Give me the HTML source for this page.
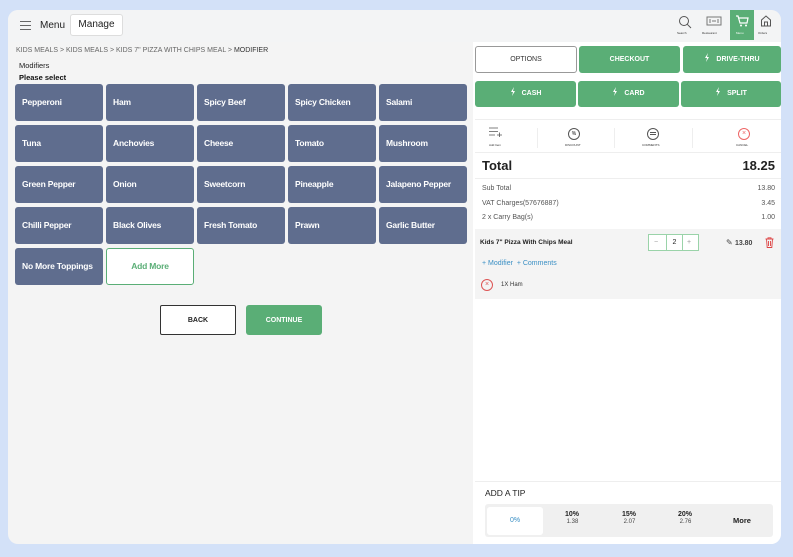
<!DOCTYPE html>
<html><head><style>
*{box-sizing:border-box;margin:0;padding:0}
body{width:793px;height:557px;background:#d3e1f8;font-family:"Liberation Sans",sans-serif;position:relative;overflow:hidden}
.frame{position:absolute;left:8px;top:10px;width:773px;height:534px;background:#f4f4f4;border-radius:10px;overflow:hidden}
.abs{position:absolute}
.hdr{left:0;top:0;width:773px;height:32px;background:#f3f4f5}
.tile{position:absolute;width:88px;height:37px;background:#5f6d8e;border-radius:3px;color:#fff;font-size:8.5px;font-weight:bold;padding-left:7px;line-height:37px;letter-spacing:-0.2px}
.gbtn{position:absolute;background:#5aae76;color:#fff;font-size:7px;font-weight:bold;text-align:center;border-radius:3px}
.small{font-size:7px;color:#555}
.bolt{display:inline-block;width:6px;height:9px;vertical-align:-1px;margin-right:6px}
</style></head><body>
<div class="frame">
 <div class="abs hdr"></div>
 <div class="abs" style="left:12px;top:11px;width:11px;height:1px;background:#666;box-shadow:0 4px 0 #666,0 8px 0 #666"></div>
 <div class="abs" style="left:32px;top:10px;font-size:10px;color:#222">Menu</div>
 <div class="abs" style="left:62px;top:4px;width:53px;height:22px;background:#fff;border:1px solid #ddd;border-radius:3px;font-size:10px;text-align:center;line-height:20px;color:#222">Manage</div>
 <svg class="abs" style="left:670px;top:5px" width="14" height="14" viewBox="0 0 14 14"><circle cx="6" cy="6" r="4.5" fill="none" stroke="#555" stroke-width="1"/><path d="M9.3 9.3L13 13" stroke="#555"/></svg>
 <div class="abs" style="left:669px;top:21px;font-size:3px;color:#333">Search</div>
 <svg class="abs" style="left:698px;top:5px" width="16" height="12" viewBox="0 0 16 12"><rect x="1" y="2" width="14" height="8" fill="none" stroke="#777"/><path d="M4 4v4M12 4v4M6 6h4" stroke="#777"/></svg>
 <div class="abs" style="left:694px;top:21px;font-size:3px;color:#333">Restaurant</div>
 <div class="abs" style="left:722px;top:0;width:24px;height:30px;background:#5aae76"></div>
 <svg class="abs" style="left:727px;top:5px" width="14" height="12" viewBox="0 0 14 12"><path d="M1 1h2l2 7h7l1-5H4" fill="none" stroke="#fff" stroke-width="1.2"/><circle cx="6" cy="10.5" r="1" fill="#fff"/><circle cx="11" cy="10.5" r="1" fill="#fff"/></svg>
 <div class="abs" style="left:728px;top:21px;font-size:3px;color:#fff">Menu</div>
 <svg class="abs" style="left:752px;top:5px" width="12" height="12" viewBox="0 0 12 12"><path d="M1.5 11V5L6 1l4.5 4v6zM4.5 11V7h3v4" fill="none" stroke="#555"/></svg>
 <div class="abs" style="left:750px;top:21px;font-size:3px;color:#333">Orders</div>

 <div class="abs" style="left:8px;top:37px;font-size:7px;color:#666">KIDS MEALS &gt; KIDS MEALS &gt; KIDS 7" PIZZA WITH CHIPS MEAL &gt; <span style="color:#333">MODIFIER</span></div>
 <div class="abs" style="left:11px;top:51px;font-size:7.5px;color:#222">Modifiers</div>
 <div class="abs" style="left:11px;top:63px;font-size:7.5px;color:#111;font-weight:bold">Please select</div>
</div>
<div class="tile" style="left:15px;top:84px">Pepperoni</div>
<div class="tile" style="left:106px;top:84px">Ham</div>
<div class="tile" style="left:197px;top:84px">Spicy Beef</div>
<div class="tile" style="left:288px;top:84px">Spicy Chicken</div>
<div class="tile" style="left:379px;top:84px">Salami</div>
<div class="tile" style="left:15px;top:125px">Tuna</div>
<div class="tile" style="left:106px;top:125px">Anchovies</div>
<div class="tile" style="left:197px;top:125px">Cheese</div>
<div class="tile" style="left:288px;top:125px">Tomato</div>
<div class="tile" style="left:379px;top:125px">Mushroom</div>
<div class="tile" style="left:15px;top:166px">Green Pepper</div>
<div class="tile" style="left:106px;top:166px">Onion</div>
<div class="tile" style="left:197px;top:166px">Sweetcorn</div>
<div class="tile" style="left:288px;top:166px">Pineapple</div>
<div class="tile" style="left:379px;top:166px">Jalapeno Pepper</div>
<div class="tile" style="left:15px;top:207px">Chilli Pepper</div>
<div class="tile" style="left:106px;top:207px">Black Olives</div>
<div class="tile" style="left:197px;top:207px">Fresh Tomato</div>
<div class="tile" style="left:288px;top:207px">Prawn</div>
<div class="tile" style="left:379px;top:207px">Garlic Butter</div>
<div class="tile" style="left:15px;top:248px">No More Toppings</div>
<div class="tile" style="left:106px;top:248px;background:#fff;border:1px solid #5aae76;color:#5aae76;text-align:center;padding:0;line-height:35px">Add More</div>
<div class="abs" style="left:160px;top:305px;width:76px;height:30px;background:#fff;border:1px solid #333;border-radius:2px;font-size:7px;font-weight:bold;text-align:center;line-height:30px;color:#222">BACK</div>
<div class="gbtn" style="left:246px;top:305px;width:76px;height:30px;line-height:32px">CONTINUE</div>

<div class="abs" style="left:473px;top:42px;width:308px;height:502px;background:#fff;border-bottom-right-radius:10px"></div>
<div class="abs" style="left:475px;top:46px;width:102px;height:27px;border:1px solid #999;border-radius:3px;font-size:7px;text-align:center;line-height:25px;color:#333">OPTIONS</div>
<div class="gbtn" style="left:579px;top:46px;width:101px;height:27px;line-height:27px">CHECKOUT</div>
<div class="gbtn" style="left:683px;top:46px;width:98px;height:27px;line-height:27px"><svg class="bolt" viewBox="0 0 6 9"><path d="M4 0L1 5h2L2 9l3-5H3z" fill="#fff"/></svg>DRIVE-THRU</div>
<div class="gbtn" style="left:475px;top:81px;width:101px;height:26px;line-height:26px"><svg class="bolt" viewBox="0 0 6 9"><path d="M4 0L1 5h2L2 9l3-5H3z" fill="#fff"/></svg>CASH</div>
<div class="gbtn" style="left:578px;top:81px;width:101px;height:26px;line-height:26px"><svg class="bolt" viewBox="0 0 6 9"><path d="M4 0L1 5h2L2 9l3-5H3z" fill="#fff"/></svg>CARD</div>
<div class="gbtn" style="left:681px;top:81px;width:100px;height:26px;line-height:26px"><svg class="bolt" viewBox="0 0 6 9"><path d="M4 0L1 5h2L2 9l3-5H3z" fill="#fff"/></svg>SPLIT</div>
<div class="abs" style="left:475px;top:119px;width:306px;height:1px;background:#eee"></div>
<svg class="abs" style="left:489px;top:127px" width="13" height="10" viewBox="0 0 13 10"><path d="M0 1h9M0 4.5h9M0 8h6M8 8h5M10.5 5.5v5" stroke="#555" stroke-width="0.8"/></svg>
<div class="abs" style="left:489px;top:143px;font-size:3px;color:#333">Add Item</div>
<div class="abs" style="left:568px;top:128px;width:12px;height:12px;border:1px solid #555;border-radius:50%;font-size:5px;text-align:center;line-height:10px">%</div>
<div class="abs" style="left:565px;top:143px;font-size:3px;color:#333">DISCOUNT</div>
<div class="abs" style="left:647px;top:128px;width:12px;height:12px;border:1px solid #555;border-radius:50%"></div>
<div class="abs" style="left:650px;top:132px;width:6px;height:1px;background:#555;box-shadow:0 2px 0 #555"></div>
<div class="abs" style="left:642px;top:143px;font-size:3px;color:#333">COMMENTS</div>
<div class="abs" style="left:738px;top:128px;width:12px;height:12px;border:1px solid #e66;border-radius:50%;color:#e66;font-size:7px;text-align:center;line-height:10px">×</div>
<div class="abs" style="left:736px;top:143px;font-size:3px;color:#333">CANCEL</div>
<div class="abs" style="left:537px;top:128px;width:1px;height:20px;background:#eee"></div>
<div class="abs" style="left:614px;top:128px;width:1px;height:20px;background:#eee"></div>
<div class="abs" style="left:692px;top:128px;width:1px;height:20px;background:#eee"></div>
<div class="abs" style="left:475px;top:152px;width:306px;height:1px;background:#eee"></div>
<div class="abs" style="left:482px;top:158px;font-size:13px;font-weight:bold;color:#222">Total</div>
<div class="abs" style="left:730px;top:158px;width:45px;text-align:right;font-size:13px;font-weight:bold;color:#222">18.25</div>
<div class="abs" style="left:475px;top:178px;width:306px;height:1px;background:#eee"></div>
<div class="abs small" style="left:482px;top:185px">Sub Total</div><div class="abs small" style="left:735px;top:185px;width:40px;text-align:right">13.80</div>
<div class="abs small" style="left:482px;top:200px">VAT Charges(57676887)</div><div class="abs small" style="left:735px;top:200px;width:40px;text-align:right">3.45</div>
<div class="abs small" style="left:482px;top:214px">2 x Carry Bag(s)</div><div class="abs small" style="left:735px;top:214px;width:40px;text-align:right">1.00</div>
<div class="abs" style="left:475px;top:229px;width:306px;height:70px;background:#f4f4f4"></div>
<div class="abs" style="left:480px;top:239px;font-size:6.5px;font-weight:bold;color:#222">Kids 7" Pizza With Chips Meal</div>
<div class="abs" style="left:648px;top:234px;width:51px;height:17px;border:1px solid #9ad3a9;background:#fff;font-size:7px;line-height:15px;color:#999"><span style="position:absolute;left:5px">−</span><span style="position:absolute;left:17px;width:17px;height:15px;border-left:1px solid #9ad3a9;border-right:1px solid #9ad3a9;text-align:center;color:#222">2</span><span style="position:absolute;left:38px">+</span></div>
<div class="abs" style="left:726px;top:238px;font-size:8px;color:#444">✎ <b style="font-size:7px">13.80</b></div>
<svg class="abs" style="left:765px;top:237px" width="9" height="11" viewBox="0 0 9 11"><path d="M0.5 2h8M3 2V0.8h3V2M1.5 2l.7 8.5h4.6L7.5 2M3.5 4v5M5.5 4v5" fill="none" stroke="#d44" stroke-width="0.9"/></svg>
<div class="abs" style="left:482px;top:260px;font-size:7px;color:#3a8fc4">+ Modifier &nbsp;+ Comments</div>
<div class="abs" style="left:481px;top:279px;width:12px;height:12px;border:1px solid #d55;border-radius:50%;color:#d55;font-size:7px;text-align:center;line-height:10px">×</div>
<div class="abs" style="left:501px;top:282px;font-size:6px;color:#333">1X Ham</div>
<div class="abs" style="left:475px;top:481px;width:306px;height:1px;background:#eee"></div>
<div class="abs" style="left:485px;top:488px;font-size:8.5px;color:#222">ADD A TIP</div>
<div class="abs" style="left:485px;top:504px;width:288px;height:33px;background:#f0f0f0;border-radius:3px"></div>
<div class="abs" style="left:487px;top:507px;width:56px;height:28px;background:#fff;border-radius:3px;font-size:7px;color:#3a8fc4;text-align:center;line-height:28px">0%</div>
<div class="abs" style="left:565px;top:511px;font-size:7px;font-weight:bold;color:#222">10%<br><span style="font-weight:normal;font-size:6px;color:#444">&nbsp;1.38</span></div>
<div class="abs" style="left:622px;top:511px;font-size:7px;font-weight:bold;color:#222">15%<br><span style="font-weight:normal;font-size:6px;color:#444">&nbsp;2.07</span></div>
<div class="abs" style="left:678px;top:511px;font-size:7px;font-weight:bold;color:#222">20%<br><span style="font-weight:normal;font-size:6px;color:#444">&nbsp;2.76</span></div>
<div class="abs" style="left:733px;top:516px;font-size:7.5px;font-weight:bold;color:#222">More</div>
</body></html>
